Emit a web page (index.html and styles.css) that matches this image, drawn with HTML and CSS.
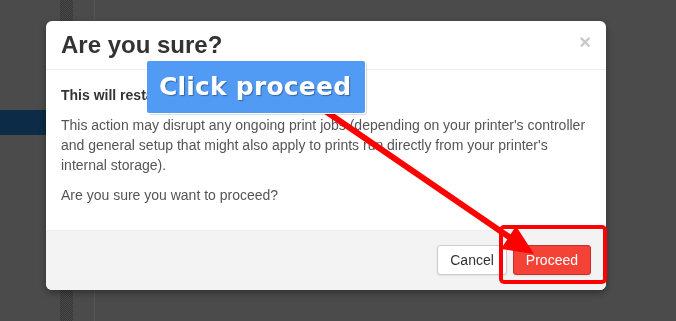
FILE: index.html
```html
<!DOCTYPE html>
<html lang="en">
<head>
  <meta charset="UTF-8" />
  <title>Are you sure?</title>
  <link rel="stylesheet" href="styles.css">
</head>
<body>

<!-- dimmed app behind the dialog -->
<div class="app">
  <div class="nav-col"><div class="nav-active"></div></div>
  <div class="scroll-strip"></div>
  <div class="gutter"></div>
  <div class="divider"></div>
  <div class="main"></div>
</div>

<!-- Confirmation Modal -->
<div class="modal">
  <div class="modal-header">
    <h3>Are you sure?</h3>
    <button class="close">&times;</button>
  </div>
  <div class="modal-body">
    <p class="lead">This will restart your printer.</p>
    <p>This action may disrupt any ongoing print jobs (depending on your printer's controller and general setup that might also apply to prints run directly from your printer's internal storage).</p>
    <p>Are you sure you want to proceed?</p>
  </div>
  <div class="modal-footer">
    <button class="btn">Cancel</button>
    <button class="btn btn-danger">Proceed</button>
  </div>
</div>

<!-- tutorial annotations -->
<div class="annotations">
  <svg class="arrow" width="676" height="321" viewBox="0 0 676 321">
    <line x1="280" y1="80" x2="512" y2="239" stroke="#ff0000" stroke-width="6" />
    <polygon points="534,254 501,249 516,226" fill="#ff0000" />
  </svg>
  <div class="highlight"></div>
  <div class="callout">Click proceed</div>
</div>

</body>
</html>
```

FILE: styles.css
```css
html, body { margin: 0; height: 100%; overflow: hidden; }
body {
  background: #4b4b4b;
  font-family: "Liberation Sans", Arial, sans-serif;
  font-size: 14px;
  line-height: 20px;
  color: #555;
}

/* background app */
.app {
  display: grid;
  grid-template-columns: 60px 13px 21px 1px 1fr;
  height: 321px;
}
.nav-col { padding-top: 110px; }
.nav-active { height: 25px; background: #0c2b46; }
.scroll-strip {
  background-color: #3f3f3f;
  background-image: repeating-conic-gradient(#363636 0 25%, #4a4a4a 0 50%);
  background-size: 2px 2px;
}
.divider { background: #555; }

/* modal */
.modal {
  position: fixed; top: 21px; left: 46px;
  width: 560px;
  background: #fff;
  border-radius: 6px;
  box-shadow: 0 3px 7px rgba(0,0,0,0.35);
  overflow: hidden;
}
.modal-header {
  display: flex; justify-content: space-between; align-items: flex-start;
  padding: 9px 15px;
  border-bottom: 1px solid #eee;
}
.modal-header h3 {
  margin: 0;
  font-size: 24px;
  line-height: 30px;
  font-weight: bold;
  color: #333;
}
.close {
  margin-top: 2px;
  padding: 0;
  border: none;
  background: none;
  font-family: inherit;
  font-size: 20px;
  font-weight: bold;
  line-height: 20px;
  color: #c8c8c8;
  cursor: pointer;
}
.modal-body { padding: 15px; }
.modal-body p { margin: 0 0 10px; }
.modal-body .lead { font-weight: bold; color: #333; }
.modal-footer {
  display: flex; justify-content: flex-end; gap: 6px;
  padding: 14px 15px 15px;
  background: #f3f3f3;
  border-top: 1px solid #eee;
}
.btn {
  padding: 4px 12px;
  font-family: inherit;
  font-size: 14px;
  line-height: 20px;
  color: #333;
  background: #fff;
  border: 1px solid #ccc;
  border-radius: 3px;
  box-shadow: 0 1px 2px rgba(0,0,0,0.08);
  cursor: pointer;
}
.btn-danger {
  color: #fff;
  background: #f44336;
  border-color: #c9302c;
}

/* annotations drawn over the screenshot */
.annotations { position: fixed; top: 0; left: 0; width: 676px; height: 321px; pointer-events: none; }
.arrow { position: absolute; top: 0; left: 0; z-index: 2; }
.highlight {
  position: absolute; left: 499px; top: 225px;
  width: 100px; height: 51px;
  border: 4px solid #ff0000;
  border-radius: 5px;
  z-index: 1;
}
.callout {
  position: absolute; left: 147px; top: 61px; z-index: 3;
  width: 218px; height: 52px;
  box-sizing: border-box;
  padding-left: 12px;
  display: flex; align-items: center;
  background: #529bf5;
  border-radius: 2px;
  box-shadow: 1px 1px 0 #fff, 2px 2px 1px rgba(0,0,0,0.15);
  font-family: "DejaVu Sans", sans-serif;
  font-weight: bold;
  font-size: 25px;
  letter-spacing: 0.2px;
  color: #fff;
  text-shadow: 1px 1px 1px rgba(0,0,0,0.35);
  white-space: nowrap;
}
```
